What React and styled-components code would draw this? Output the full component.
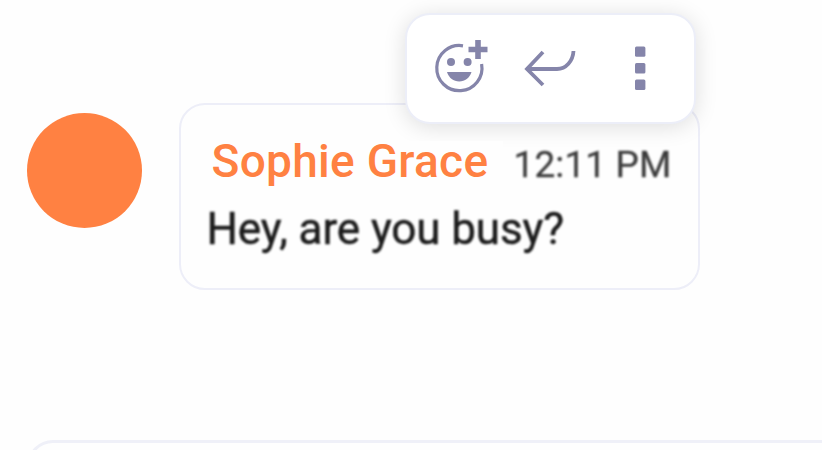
import React from 'react';
import styled, { createGlobalStyle } from 'styled-components';

const GlobalStyle = createGlobalStyle`
    body {
        margin: 0;
        background-color: #fefefe;
        font-family: Roboto, "Liberation Sans", sans-serif;
    }
`;

const ChatPage = styled.div`
    display: flex;
    flex-direction: column;
    justify-content: space-between;
    box-sizing: border-box;
    height: 450px;
    padding-top: 103px;
    padding-left: 27.4px;
    overflow: hidden;
`;

const MessageRow = styled.div`
    display: flex;
    align-items: flex-start;
    gap: 36.2px;
`;

const Avatar = styled.div`
    width: 115px;
    height: 115px;
    margin-top: 10px;
    border-radius: 50%;
    background-color: #ff8142;
`;

const Bubble = styled.div`
    position: relative;
    box-sizing: border-box;
    width: 521px;
    height: 187px;
    padding: 36px 0 0 26px;
    border: 2px solid #edeef8;
    border-radius: 26px;
    background-color: #fefefe;
`;

const Header = styled.div`
    display: flex;
    align-items: baseline;
    margin-bottom: 16px;
    white-space: nowrap;
`;

const Name = styled.span`
    position: relative;
    z-index: 2;
    width: 291px;
    padding-left: 5px;
    background-color: #fefefe;
    color: #ff8142;
    font-size: 46px;
    font-weight: 500;
    line-height: 40px;
    letter-spacing: 0.28px;
`;

const Time = styled.span`
    position: relative;
    z-index: 2;
    margin-left: 11px;
    color: #3c3c3c;
    font-size: 37px;
    line-height: 40px;
    letter-spacing: 0.1px;
    -webkit-text-stroke: 0.3px #3c3c3c;
    filter: blur(0.8px);
`;

const MessageText = styled.p`
    margin: 0;
    color: #1c1c1c;
    font-size: 44px;
    line-height: 56px;
    letter-spacing: -0.1px;
    white-space: nowrap;
    -webkit-text-stroke: 0.5px #1c1c1c;
    filter: blur(0.9px);
`;

/* floats over the top right corner of the bubble */
const Toolbar = styled.div`
    position: absolute;
    top: -92px;
    right: 2px;
    z-index: 1;
    display: flex;
    align-items: center;
    box-sizing: border-box;
    width: 291px;
    height: 111px;
    padding: 0 0 2px 27px;
    border: 2px solid #eceef8;
    border-radius: 25px;
    background-color: #fff;
    box-shadow: 0 3px 22px rgba(0, 0, 0, 0.13);
`;

const IconButton = styled.button`
    display: flex;
    margin-left: ${(props) => props.$space || 0}px;
    padding: 0;
    border: none;
    background: none;
    color: #8585aa;
    cursor: pointer;
    filter: blur(0.7px);
`;

const Composer = styled.div`
    box-sizing: border-box;
    width: 840px;
    height: 60px;
    margin-bottom: -50px;
    flex-shrink: 0;
    border: 3px solid #eff0f8;
    border-radius: 26px;
`;

const ReactIcon = () => (
    <svg width="54" height="56" viewBox="0 0 54 56" fill="none">
        <path d="M29 5.8A22.6 22.6 0 1 0 47.6 24" stroke="currentColor" strokeWidth="3.2" />
        <circle cx="17" cy="22" r="4" fill="currentColor" />
        <circle cx="33.6" cy="22" r="4" fill="currentColor" />
        <path d="M13 32H37.5C35.5 38 31 41.5 25.2 41.5S15 38 13 32Z" fill="currentColor" />
        <path d="M44 0V19M34.5 9.5H53.5" stroke="currentColor" strokeWidth="5.6" />
    </svg>
);

const ReplyIcon = () => (
    <svg width="52" height="38" viewBox="0 0 52 38" fill="none">
        <path
            d="M19 3L3 20L19 36M4 20H33C42 20 49 12 49.5 2"
            stroke="currentColor"
            strokeWidth="3.8"
        />
    </svg>
);

const MoreIcon = () => (
    <svg width="12" height="46" viewBox="0 0 12 46" fill="currentColor">
        <rect x="1" y="1.4" width="10.4" height="10.4" rx="1.5" />
        <rect x="1" y="18" width="10.4" height="10.4" rx="1.5" />
        <rect x="1" y="34.6" width="10.4" height="10.4" rx="1.5" />
    </svg>
);

const App = () => {
    return (
        <>
            <GlobalStyle />
            <ChatPage>
                <MessageRow>
                    <Avatar />
                    <Bubble>
                        <Toolbar>
                            <IconButton aria-label="Add reaction"><ReactIcon /></IconButton>
                            <IconButton $space={36} aria-label="Reply"><ReplyIcon /></IconButton>
                            <IconButton $space={58} aria-label="More"><MoreIcon /></IconButton>
                        </Toolbar>
                        <Header>
                            <Name>Sophie Grace</Name>
                            <Time>12:11 PM</Time>
                        </Header>
                        <MessageText>Hey, are you busy?</MessageText>
                    </Bubble>
                </MessageRow>
                <Composer />
            </ChatPage>
        </>
    );
};

export default App;
